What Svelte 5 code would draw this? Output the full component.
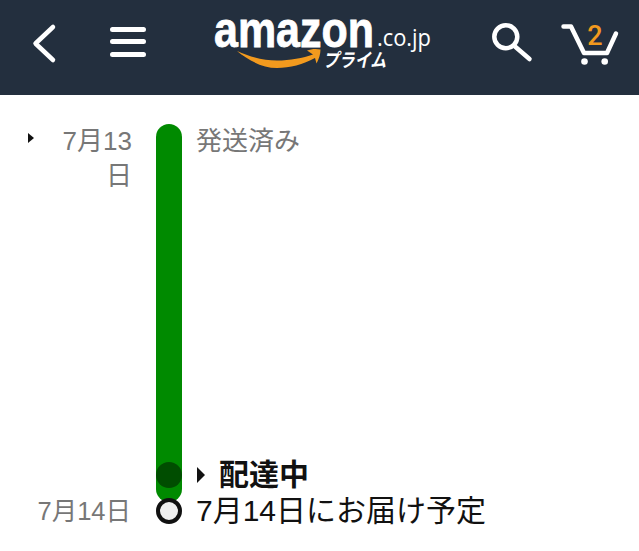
<script lang="ts">
	let cartCount = $state(2);
</script>

<header class="topbar">
	<svg class="back" viewBox="26 0 40 95" aria-label="戻る">
		<path d="M53 27 L35.5 43.5 L53 60" />
	</svg>
	<svg class="menu" viewBox="106 0 44 95" aria-label="メニュー">
		<path d="M112.5 29.5H143.5M112.5 41.5H143.5M112.5 54.5H143.5" />
	</svg>
	<svg class="logo" viewBox="210 0 225 95" aria-label="amazon.co.jp プライム">
		<text class="word" x="214" y="46.5" textLength="160" lengthAdjust="spacingAndGlyphs">amazon</text>
		<text class="tld" x="377" y="46" textLength="54" lengthAdjust="spacingAndGlyphs">.co.jp</text>
		<text class="prime" x="323" y="66.5" textLength="63" lengthAdjust="spacingAndGlyphs">プライム</text>
		<path class="smile" d="M237 51 C250 57 264 60.5 277 60.5 C290 60.5 303 58 313 54.5 L307 50.5 C311 49 316 48.5 320.5 49.5 C320.5 54 319 59 316.5 63.5 L315 58 C303 64.5 290 68 277 68 C262 68 248 60 237 51Z" />
	</svg>
	<svg class="search" viewBox="488 0 46 95" aria-label="検索">
		<circle cx="505.8" cy="36.7" r="11.5" />
		<path d="M515 46.5 L529.5 59" />
	</svg>
	<svg class="cart" viewBox="558 0 64 95" aria-label="カート">
		<path d="M563.5 26.5 H571 L584 53 H607 L616 33.5" />
		<circle class="wheel" cx="584.5" cy="61.5" r="3.3" />
		<circle class="wheel" cx="604.7" cy="61.5" r="3.3" />
		<text class="count" x="595" y="45" text-anchor="middle">{cartCount}</text>
	</svg>
</header>

<main class="timeline">
	<div class="date first">
		<span class="caret small"></span>
		<span class="date-text">7月13日</span>
	</div>
	<div class="track">
		<div class="bar">
			<span class="dot"></span>
		</div>
		<span class="ring"></span>
	</div>
	<div class="label done">発送済み</div>
	<div class="label current">
		<span class="caret"></span>
		<strong>配達中</strong>
	</div>
	<div class="date last"><span class="date-text">7月14日</span></div>
	<div class="label eta">7月14日にお届け予定</div>
</main>

<style>
	:global(body) {
		background: #fff;
		font-family: 'Liberation Sans', 'Noto Sans CJK JP', sans-serif;
	}

	.topbar {
		display: flex;
		height: 95px;
		background: #232f3e;
	}

	.topbar svg {
		height: 95px;
		flex-shrink: 0;
	}

	.topbar path,
	.topbar circle {
		fill: none;
		stroke: #fff;
		stroke-width: 4.5;
		stroke-linecap: round;
		stroke-linejoin: round;
	}

	.back {
		width: 40px;
		margin-left: 26px;
	}

	.menu {
		width: 44px;
		margin-left: 40px;
	}

	.topbar .menu path {
		stroke-width: 5;
	}

	.logo {
		width: 225px;
		margin-left: 60px;
	}

	.logo text {
		fill: #fff;
	}

	.word {
		font-family: 'Liberation Sans', sans-serif;
		font-size: 50px;
		font-weight: 700;
		stroke: #fff;
		stroke-width: 0.8;
	}

	.tld {
		font-family: 'Open Sans', sans-serif;
		font-size: 24px;
		font-weight: 400;
	}

	.prime {
		font-family: 'Noto Sans CJK JP', sans-serif;
		font-size: 19px;
		font-weight: 700;
		font-style: italic;
	}

	.topbar .smile {
		fill: #f29a1e;
		stroke: none;
	}

	.search {
		width: 46px;
		margin-left: 53px;
	}

	.cart {
		width: 64px;
		margin-left: 24px;
	}

	.topbar .wheel {
		fill: #fff;
		stroke: none;
	}

	.count {
		fill: #f29a1e;
		font-family: Roboto, sans-serif;
		font-size: 27px;
		font-weight: 500;
	}

	.timeline {
		display: grid;
		grid-template-columns: 156px 26px 1fr;
		grid-template-rows: 332px 38px 34px;
		padding-top: 29px;
	}

	.date {
		grid-column: 1;
		padding-right: 25px;
		color: #777;
		font-size: 26px;
		line-height: 35px;
		text-align: right;
	}

	.date.first {
		display: flex;
		align-items: flex-start;
		grid-row: 1;
		padding-right: 24px;
	}

	.date.first .date-text {
		flex: 1;
		margin-left: 24px;
	}

	.date.last {
		grid-row: 3;
		font-size: 25.5px;
	}

	.caret {
		display: inline-block;
		border-left: 8px solid #111;
		border-top: 8px solid transparent;
		border-bottom: 8px solid transparent;
	}

	.caret.small {
		position: relative;
		top: 9px;
		margin-left: 28px;
		border-left-width: 6px;
		border-top-width: 5px;
		border-bottom-width: 5px;
	}

	.track {
		grid-column: 2;
		grid-row: 1 / 4;
		display: flex;
		flex-direction: column;
	}

	.bar {
		display: flex;
		align-items: flex-end;
		height: 378px;
		padding-bottom: 14px;
		box-sizing: border-box;
		background: #008a00;
		border-radius: 13px;
	}

	.dot {
		width: 26px;
		height: 26px;
		background: #004d00;
		border-radius: 50%;
	}

	.ring {
		width: 26px;
		height: 26px;
		margin-top: -4px;
		box-sizing: border-box;
		background: #f0f0f0;
		border: 4.5px solid #111;
		border-radius: 50%;
	}

	.label {
		grid-column: 3;
		padding-left: 14px;
	}

	.done {
		grid-row: 1;
		color: #777;
		font-size: 26px;
		line-height: 35px;
	}

	.current {
		grid-row: 2;
		display: flex;
		align-items: center;
		gap: 14px;
		padding-left: 15px;
		color: #111;
		font-size: 30px;
		line-height: 38px;
	}

	.eta {
		grid-row: 3;
		color: #111;
		font-size: 30px;
		line-height: 34px;
	}
</style>
